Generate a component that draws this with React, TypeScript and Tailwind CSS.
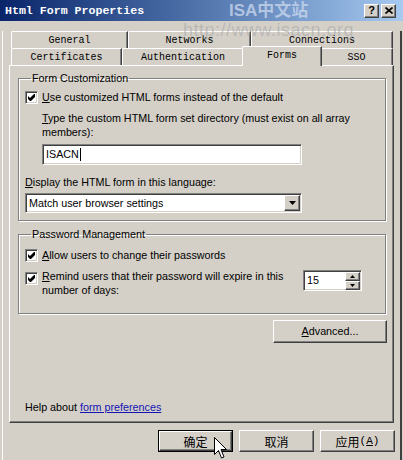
import React from "react";

const sunken =
  "border border-t-[#808080] border-l-[#808080] border-b-white border-r-white shadow-[inset_1px_1px_#404040,inset_-1px_-1px_#d4d0c8]";
const raised =
  "border border-t-white border-l-white border-b-[#404040] border-r-[#404040] shadow-[inset_-1px_-1px_#808080]";
const groupBox =
  "border border-[#808080] shadow-[inset_1px_1px_#ffffff,1px_1px_#ffffff]";

function Check() {
  return (
    <span className={`flex h-[13px] w-[13px] shrink-0 items-center justify-center bg-white ${sunken}`}>
      <svg width="7" height="7" viewBox="0 0 7 7">
        <polygon points="0,2 2,4 6,0 7,0 7,3 3,7 2,7 0,5" fill="#000" />
      </svg>
    </span>
  );
}

function Tab({ label, w, selected }: { label: string; w: string; selected?: boolean }) {
  return (
    <div
      className={`${w} flex items-center justify-center rounded-tl-[2px] border-t border-l border-t-white border-l-white border-r border-r-[#404040] shadow-[inset_-1px_0_#808080] bg-[#d4d0c8] font-['Liberation_Mono',monospace] text-[10px] ${
        selected ? "relative z-10 -mx-[2px] -mb-px h-[20px] pb-[3px]" : "h-[17px] pt-px"
      }`}
    >
      {label}
    </div>
  );
}

function DlgButton({ children, def }: { children: React.ReactNode; def?: boolean }) {
  const inner = (
    <span className={`flex h-full w-full items-center justify-center ${raised}`}>{children}</span>
  );
  return def ? (
    <span className="flex h-[22px] w-[75px] border border-black">{inner}</span>
  ) : (
    <span className="flex h-[22px] w-[75px]">{inner}</span>
  );
}

export default function App() {
  return (
    <div className="relative h-[460px] w-[403px] overflow-hidden bg-[#d4d0c8] font-['Liberation_Sans',Arial,sans-serif] text-[10.75px] leading-[13px] text-black">
      {/* title bar */}
      <div className="flex h-[21px] items-center bg-linear-to-r from-[#0a246a] to-[#a6caf0] pl-[5px] pr-[7px]">
        <span className="font-['Liberation_Mono',monospace] text-[11.6px] font-bold text-white">
          Html Form Properties
        </span>
        <div className="ml-auto flex gap-[2px]">
          <span className={`flex h-[14px] w-[15px] items-center justify-center bg-[#d4d0c8] text-[11px] font-bold leading-none ${raised}`}>
            ?
          </span>
          <span className={`flex h-[14px] w-[15px] items-center justify-center bg-[#d4d0c8] ${raised}`}>
            <svg width="8" height="7" viewBox="0 0 8 7">
              <path d="M0.5 0.5 L7.5 6.5 M7.5 0.5 L0.5 6.5" stroke="#000" strokeWidth="1.6" />
            </svg>
          </span>
        </div>
      </div>

      {/* dialog body */}
      <div className="ml-[2px] h-[437px] w-[400px] border-l border-b-2 border-r-2 border-l-white border-b-[#404040] border-r-[#404040]">
        {/* tabs */}
        <div className="ml-[8px] mt-[10px] w-[382px]">
          <div className="flex">
            <Tab label="General" w="w-[117px]" />
            <Tab label="Networks" w="w-[123px]" />
            <Tab label="Connections" w="w-[142px]" />
          </div>
          <div className="flex h-[17px] items-end">
            <Tab label="Certificates" w="w-[111px]" />
            <Tab label="Authentication" w="w-[122px]" />
            <Tab label="Forms" w="w-[80px]" selected />
            <Tab label="SSO" w="w-[73px]" />
          </div>
        </div>

        {/* panel */}
        <div className="ml-[6px] flex h-[358px] w-[385px] flex-col border-t border-l border-t-white border-l-white border-b border-r border-b-[#404040] border-r-[#404040] shadow-[inset_-1px_-1px_#808080]">
          <fieldset className={`ml-[8px] mt-[6px] w-[368px] pb-[7px] pl-[6px] ${groupBox}`}>
            <legend className="ml-[6px] px-[1px] leading-[13px]">Form Customization</legend>
            <div className="mt-[6px] flex items-center gap-[4px]">
              <Check />
              <span>
                <u>U</u>se customized HTML forms instead of the default
              </span>
            </div>
            <div className="ml-[17px] mt-[7px] leading-[14px]">
              <u>T</u>ype the custom HTML form set directory (must exist on all array
              <br />
              members):
            </div>
            <div className={`ml-[17px] mt-[5px] flex h-[21px] w-[260px] items-center bg-white pl-[3px] ${sunken}`}>
              ISACN
              <span className="ml-px h-[13px] w-px bg-black" />
            </div>
            <div className="mt-[11px]">
              <u>D</u>isplay the HTML form in this language:
            </div>
            <div className={`mt-[4px] flex h-[20px] w-[277px] items-center bg-white pl-[3px] ${sunken}`}>
              Match user browser settings
              <span className={`ml-auto mr-px flex h-[16px] w-[16px] items-center justify-center bg-[#d4d0c8] ${raised}`}>
                <svg width="7" height="4" viewBox="0 0 7 4">
                  <polygon points="0,0 7,0 3.5,4" fill="#000" />
                </svg>
              </span>
            </div>
          </fieldset>

          <fieldset className={`ml-[8px] mt-[7px] w-[368px] pb-[16px] pl-[6px] ${groupBox}`}>
            <legend className="ml-[6px] px-[1px] leading-[13px]">Password Management</legend>
            <div className="mt-[8px] flex items-center gap-[4px]">
              <Check />
              <span>
                <u>A</u>llow users to change their passwords
              </span>
            </div>
            <div className="mt-[7px] flex items-start">
              <span className="mt-[3px]">
                <Check />
              </span>
              <div className="ml-[4px] w-[257px] leading-[14px]">
                <u>R</u>emind users that their password will expire in this
                <br />
                number of days:
              </div>
              <div className={`ml-[4px] mt-px flex h-[21px] w-[59px] items-center bg-white pl-[3px] ${sunken}`}>
                15
                <span className="ml-auto mr-px flex flex-col">
                  <span className={`flex h-[9px] w-[15px] items-center justify-center bg-[#d4d0c8] ${raised}`}>
                    <svg width="5" height="3" viewBox="0 0 5 3">
                      <polygon points="2.5,0 5,3 0,3" fill="#000" />
                    </svg>
                  </span>
                  <span className={`flex h-[9px] w-[15px] items-center justify-center bg-[#d4d0c8] ${raised}`}>
                    <svg width="5" height="3" viewBox="0 0 5 3">
                      <polygon points="0,0 5,0 2.5,3" fill="#000" />
                    </svg>
                  </span>
                </span>
              </div>
            </div>
          </fieldset>

          <div className={`ml-[263px] mt-[6px] flex h-[23px] w-[114px] items-center justify-center ${raised}`}>
            <span>
              <u>A</u>dvanced...
            </span>
          </div>

          <div className="ml-[15px] mt-auto mb-[8px]">
            Help about{" "}
            <span className="text-[#1414b4] underline">form preferences</span>
          </div>
        </div>

        {/* dialog buttons */}
        <div className="ml-[155px] mt-[7px] flex gap-[6px] font-['Noto_Sans_CJK_SC','Liberation_Sans',sans-serif] text-[12px]">
          <DlgButton def>确定</DlgButton>
          <DlgButton>取消</DlgButton>
          <DlgButton>
            应用<span className="font-['Liberation_Mono',monospace] text-[11px]">(<u>A</u>)</span>
          </DlgButton>
        </div>
      </div>

      {/* watermark */}
      <div className="pointer-events-none absolute left-[229px] top-[1px] font-['Liberation_Sans','Noto_Sans_CJK_SC',sans-serif] text-[17px] font-bold leading-[19px] text-[#c8d6ec]/80">
        ISA中文站
      </div>
      <div className="pointer-events-none absolute left-[183px] top-[20px] font-['Liberation_Sans',sans-serif] text-[18px] leading-[20px] tracking-[0.5px] text-[#a8a8a8]/60">
        http://www.isacn.org
      </div>

      {/* mouse cursor */}
      <svg className="absolute left-[214px] top-[437px]" width="13" height="23" viewBox="0 0 13 23">
        <path d="M0.5 0.5 L0.5 17.5 L4.5 13.5 L7.5 21 L10 20 L7 12.5 L12.5 12.5 Z" fill="#fff" stroke="#000" strokeWidth="1" />
      </svg>
    </div>
  );
}
